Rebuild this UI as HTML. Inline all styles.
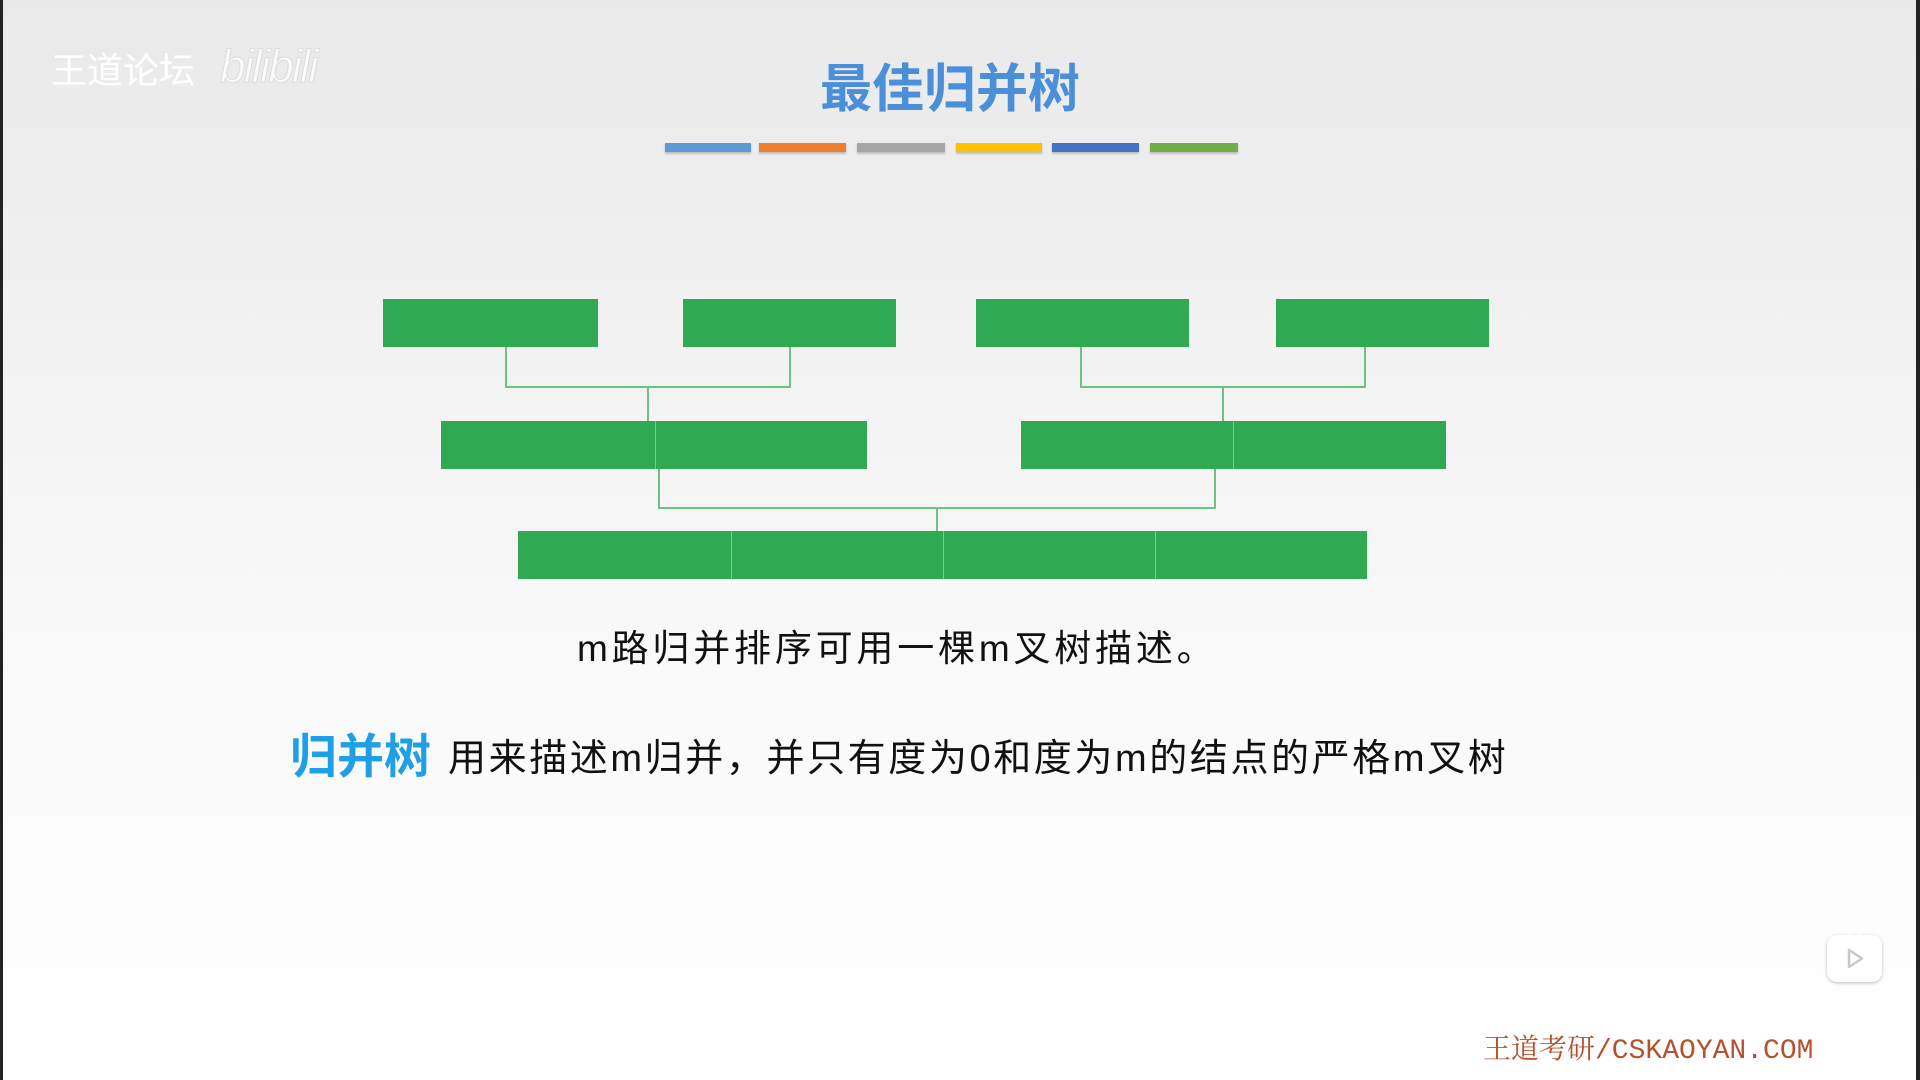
<!DOCTYPE html>
<html><head><meta charset="utf-8"><style>
html,body{margin:0;padding:0}
body{width:1920px;height:1080px;position:relative;overflow:hidden;background:linear-gradient(#e9e9ea 0px,#f1f1f2 300px,#f9f9fa 650px,#ffffff 1080px);font-family:"Liberation Sans","Noto Sans CJK SC",sans-serif}
.a{position:absolute}
.g{position:absolute;background:#2faa52;height:48px}
.d{position:absolute;width:1px;background:#7cc98e}
.ln{position:absolute;background:#6cc280}
.bar{position:absolute;top:143px;height:9px;box-shadow:0 2px 2px rgba(0,0,0,.2)}
</style></head><body>
<div class="a" style="left:0;top:0;width:3px;height:1080px;background:#222"></div>
<div class="a" style="right:0;top:0;width:4px;height:1080px;background:#222"></div>

<div class="a" style="left:51px;top:50px;font-size:36px;color:#fff;white-space:nowrap;line-height:42px">王道论坛</div>
<div class="a" style="left:220px;top:38px;font-size:46px;color:rgba(255,255,255,.8);font-style:italic;letter-spacing:-2px;line-height:56px;-webkit-text-stroke:1px #ddd">bilibili</div>

<div class="a" style="left:0;width:1900px;top:56px;text-align:center;font-size:52px;font-weight:bold;color:#4a8fd8;line-height:68px">最佳归并树</div>

<div class="bar" style="left:665px;width:86px;background:#5b9bd5"></div>
<div class="bar" style="left:759px;width:87px;background:#ed7d31"></div>
<div class="bar" style="left:857px;width:88px;background:#a5a5a5"></div>
<div class="bar" style="left:956px;width:86px;background:#ffc000"></div>
<div class="bar" style="left:1052px;width:87px;background:#4472c4"></div>
<div class="bar" style="left:1150px;width:88px;background:#70ad47"></div>

<div class="g" style="left:383px;top:299px;width:215px"></div>
<div class="g" style="left:683px;top:299px;width:213px"></div>
<div class="g" style="left:976px;top:299px;width:213px"></div>
<div class="g" style="left:1276px;top:299px;width:213px"></div>
<div class="ln" style="left:505px;top:347px;width:2px;height:41px"></div>
<div class="ln" style="left:789px;top:347px;width:2px;height:41px"></div>
<div class="ln" style="left:505px;top:386px;width:286px;height:2px"></div>
<div class="ln" style="left:647px;top:386px;width:2px;height:35px"></div>
<div class="ln" style="left:1080px;top:347px;width:2px;height:41px"></div>
<div class="ln" style="left:1364px;top:347px;width:2px;height:41px"></div>
<div class="ln" style="left:1080px;top:386px;width:286px;height:2px"></div>
<div class="ln" style="left:1222px;top:386px;width:2px;height:35px"></div>
<div class="g" style="left:441px;top:421px;width:426px"></div>
<div class="d" style="left:655px;top:421px;height:48px"></div>
<div class="g" style="left:1021px;top:421px;width:425px"></div>
<div class="d" style="left:1233px;top:421px;height:48px"></div>
<div class="ln" style="left:658px;top:469px;width:2px;height:40px"></div>
<div class="ln" style="left:1214px;top:469px;width:2px;height:40px"></div>
<div class="ln" style="left:658px;top:507px;width:558px;height:2px"></div>
<div class="ln" style="left:936px;top:507px;width:2px;height:24px"></div>
<div class="g" style="left:518px;top:531px;width:849px"></div>
<div class="d" style="left:731px;top:531px;height:48px"></div>
<div class="d" style="left:943px;top:531px;height:48px"></div>
<div class="d" style="left:1155px;top:531px;height:48px"></div>

<div class="a" style="left:577px;top:624px;font-size:37px;color:#111;white-space:nowrap;line-height:50px;letter-spacing:3.8px">m路归并排序可用一棵m叉树描述。</div>

<div class="a" style="left:290px;top:727px;font-size:47px;font-weight:bold;color:#1fa0e6;white-space:nowrap;line-height:60px">归并树</div>
<div class="a" style="left:448px;top:733px;font-size:38px;color:#111;white-space:nowrap;line-height:52px;letter-spacing:2.6px">用来描述m归并，并只有度为0和度为m的结点的严格m叉树</div>

<div class="a" style="left:1827px;top:935px;width:55px;height:47px;border-radius:10px;background:#fff;box-shadow:0 1px 3px rgba(0,0,0,.25)">
<svg width="55" height="47" viewBox="0 0 55 47"><path d="M22 15 L35 23.5 L22 32 Z" fill="none" stroke="#c8c8c8" stroke-width="2.5" stroke-linejoin="round"/></svg>
</div>
<svg class="a" style="left:1840px;top:925px" width="30" height="12"><path d="M6 2 L11 10 M24 2 L19 10" stroke="#fff" stroke-width="3" stroke-linecap="round"/></svg>

<div class="a" style="left:1483px;top:1035px;font-size:28px;color:#b5522e;white-space:nowrap;line-height:34px;font-family:'Liberation Mono','Noto Serif CJK SC',serif">王道考研/CSKAOYAN.COM</div>
</body></html>
